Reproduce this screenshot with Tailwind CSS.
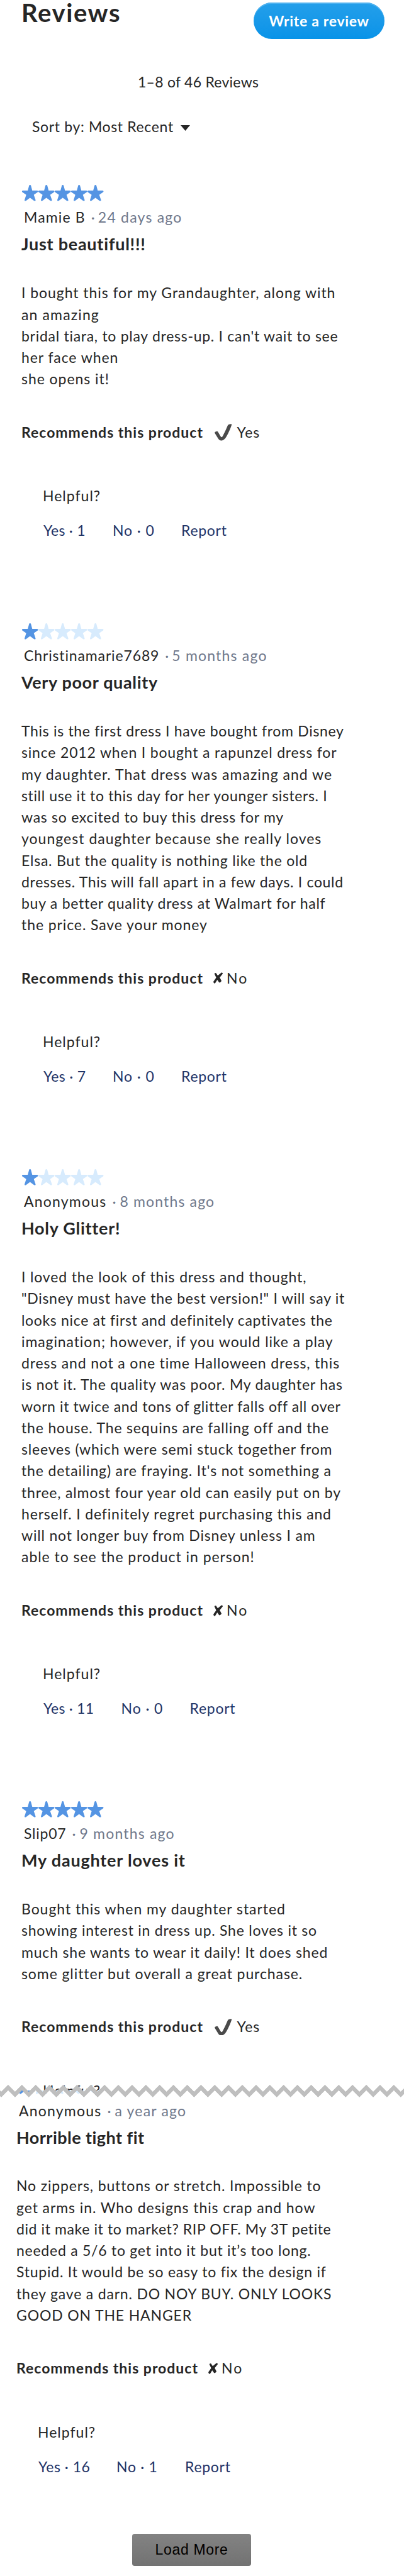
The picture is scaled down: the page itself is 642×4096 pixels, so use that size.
<!DOCTYPE html>
<html lang="en">
<head>
    <meta charset="UTF-8">
    <meta name="viewport" content="width=device-width, initial-scale=1.0">
    <title>Reviews</title>
    <script src="https://cdn.jsdelivr.net/npm/@tailwindcss/browser@4"></script>
</head>
<body class="bg-white font-['Lato','Open_Sans',sans-serif] text-[23px] leading-[30px] text-[#262626]">
    <!-- Shared icons -->
    <svg class="absolute w-0 h-0">
        <defs>
            <path id="star" d="M61 6Q63 0 69 0Q75 0 77 6L88 48L130 48Q137 49 137 56Q136 60 132 63L101 84L116 127Q118 135 110 136Q106 136 103 134L69 109L35 134Q32 136 28 136Q22 135 23 127L37 84L6 63Q2 60 1 56Q1 49 8 48L50 48Z"/>
            <path id="tear" d="M-19.9 18.4l10.945-11 10.945 11 10.945-11 10.945 11 10.945-11 10.945 11 10.945-11 10.945 11 10.945-11 10.945 11 10.945-11 10.945 11 10.945-11 10.945 11 10.945-11 10.945 11 10.945-11 10.945 11 10.945-11 10.945 11 10.945-11 10.945 11 10.945-11 10.945 11 10.945-11 10.945 11 10.945-11 10.945 11 10.945-11 10.945 11 10.945-11 10.945 11 10.945-11 10.945 11 10.945-11 10.945 11 10.945-11 10.945 11 10.945-11 10.945 11 10.945-11 10.945 11 10.945-11 10.945 11 10.945-11 10.945 11 10.945-11 10.945 11 10.945-11 10.945 11 10.945-11 10.945 11 10.945-11 10.945 11 10.945-11 10.945 11 10.945-11 10.945 11 10.945-11 10.945 11 10.945-11 10.945 11 10.945-11 10.945 11 10.945-11 10.945 11"/>
        </defs>
        <symbol id="stars-5" viewBox="0 0 690 138">
            <g fill="#5494e3"><use href="#star"/><use href="#star" x="138"/><use href="#star" x="276"/><use href="#star" x="414"/><use href="#star" x="552"/></g>
        </symbol>
        <symbol id="stars-1" viewBox="0 0 690 138">
            <use href="#star" fill="#5494e3"/>
            <g fill="#d7ebfd"><use href="#star" x="138"/><use href="#star" x="276"/><use href="#star" x="414"/><use href="#star" x="552"/></g>
        </symbol>
        <symbol id="check" viewBox="0 0 145 140">
            <path d="M111 10Q118 0 144 2C140 20 110 95 88 122Q54 156 32 126L2 78Q-1 68 8 65Q24 58 29 68L50 104Q58 118 67 104Q90 60 111 10Z"/>
        </symbol>
        <symbol id="cross" viewBox="0 0 82 95">
            <path d="M9 12Q12 5 22 5L37 27L70 1Q76 3 81 10L54 43L69 72Q64 84 50 87L33 64L15 93Q5 95 1 83L1 78L24 45Z"/>
        </symbol>
    </svg>

    <main class="relative w-[642px] h-[4096px] overflow-hidden">
        <header class="flex items-start justify-between h-[62px] pl-[34px] pr-[31px]">
            <h1 class="text-[40px] leading-[40px] font-bold tracking-[1.6px]">Reviews</h1>
            <button class="mt-1 w-[208px] h-[58px] rounded-full bg-linear-to-b from-[#239fea] to-[#0793e8] shadow-[inset_0_2px_0_#4fb2ef] text-white font-bold tracking-[.68px] leading-[30px]">Write a review</button>
        </header>
        <p class="mt-[53px] ml-[219px] tracking-[.26px]">1–8 of 46 Reviews</p>
        <div class="flex items-center mt-[41px] ml-[51px]">
            <span class="w-[236px] tracking-[.65px] whitespace-nowrap">Sort by: Most Recent</span>
            <svg class="w-[15px] h-[9px] mt-[4px]" viewBox="0 0 15 9"><path d="M0 0H15L7.5 9Z" fill="#262626"/></svg>
        </div>

        <!-- Review 1 -->
        <article class="mt-[78px] pl-[34px]">
            <svg class="block w-[131.4px] h-[26px]"><use href="#stars-5"/></svg>
            <div class="flex mt-[10.4px] pl-[4px] text-[#6f788b]">
                <span class="text-[#262626] tracking-[1.15px]">Mamie B</span>
                <span class="ml-[9px] w-[6px] text-center">·</span>
                <span class="ml-[5px] tracking-[1.22px]">24 days ago</span>
            </div>
            <h2 class="mt-[11px] text-[27px] leading-[34px] font-bold tracking-[.75px]">Just beautiful!!!</h2>
            <p class="mt-[42.9px] leading-[34.26px] whitespace-nowrap">
                <span class="block tracking-[.94px]">I bought this for my Grandaughter, along with</span>
                <span class="block tracking-[1.13px]">an amazing</span>
                <span class="block tracking-[.72px]">bridal tiara, to play dress-up. I can't wait to see</span>
                <span class="block tracking-[.91px]">her face when</span>
                <span class="block tracking-[.94px]">she opens it!</span>
            </p>
            <div class="flex items-start mt-[52px] h-[30px]">
                <b class="w-[307px] tracking-[.99px]">Recommends this product</b>
                <svg class="w-[27.6px] h-[26.7px] mt-[2.4px] fill-[#4a4a4a]"><use href="#check"/></svg>
                <span class="ml-[8px] tracking-[.83px]">Yes</span>
            </div>
            <p class="mt-[71.6px] pl-[34px] tracking-[1.01px]">Helpful?</p>
            <div class="flex mt-[25px] pl-[35px] text-[#1f3467]">
                <span class="w-[110px] tracking-[.24px]">Yes · 1</span>
                <span class="w-[109px] tracking-[.9px]">No · 0</span>
                <span class="tracking-[.72px]">Report</span>
            </div>
        </article>

        <!-- Review 2 -->
        <article class="mt-[132.5px] pl-[34px]">
            <svg class="block w-[131.4px] h-[26px]"><use href="#stars-1"/></svg>
            <div class="flex mt-[10.4px] pl-[4px] text-[#6f788b]">
                <span class="text-[#262626] tracking-[.86px]">Christinamarie7689</span>
                <span class="ml-[9px] w-[6px] text-center">·</span>
                <span class="ml-[5px] tracking-[1.19px]">5 months ago</span>
            </div>
            <h2 class="mt-[11px] text-[27px] leading-[34px] font-bold tracking-[.65px]">Very poor quality</h2>
            <p class="mt-[42.9px] leading-[34.26px] whitespace-nowrap">
                <span class="block tracking-[.68px]">This is the first dress I have bought from Disney</span>
                <span class="block tracking-[.82px]">since 2012 when I bought a rapunzel dress for</span>
                <span class="block tracking-[1px]">my daughter. That dress was amazing and we</span>
                <span class="block tracking-[.63px]">still use it to this day for her younger sisters. I</span>
                <span class="block tracking-[.72px]">was so excited to buy this dress for my</span>
                <span class="block tracking-[1.02px]">youngest daughter because she really loves</span>
                <span class="block tracking-[.77px]">Elsa. But the quality is nothing like the old</span>
                <span class="block tracking-[.68px]">dresses. This will fall apart in a few days. I could</span>
                <span class="block tracking-[.74px]">buy a better quality dress at Walmart for half</span>
                <span class="block tracking-[.9px]">the price. Save your money</span>
            </p>
            <div class="flex items-start mt-[52px] h-[30px]">
                <b class="w-[304.5px] tracking-[.99px]">Recommends this product</b>
                <svg class="w-[15.5px] h-[18px] mt-[6.8px] fill-[#262626]"><use href="#cross"/></svg>
                <span class="ml-[6px] tracking-[2px]">No</span>
            </div>
            <p class="mt-[71.6px] pl-[34px] tracking-[1.01px]">Helpful?</p>
            <div class="flex mt-[25px] pl-[35px] text-[#1f3467]">
                <span class="w-[110px] tracking-[.34px]">Yes · 7</span>
                <span class="w-[109px] tracking-[.9px]">No · 0</span>
                <span class="tracking-[.72px]">Report</span>
            </div>
        </article>

        <!-- Review 3 -->
        <article class="mt-[132.5px] pl-[34px]">
            <svg class="block w-[131.4px] h-[26px]"><use href="#stars-1"/></svg>
            <div class="flex mt-[10.4px] pl-[4px] text-[#6f788b]">
                <span class="text-[#262626] tracking-[1.21px]">Anonymous</span>
                <span class="ml-[9px] w-[6px] text-center">·</span>
                <span class="ml-[6px] tracking-[1.15px]">8 months ago</span>
            </div>
            <h2 class="mt-[11px] text-[27px] leading-[34px] font-bold tracking-[.72px]">Holy Glitter!</h2>
            <p class="mt-[42.9px] leading-[34.26px] whitespace-nowrap">
                <span class="block tracking-[.85px]">I loved the look of this dress and thought,</span>
                <span class="block tracking-[.71px]">"Disney must have the best version!" I will say it</span>
                <span class="block tracking-[.67px]">looks nice at first and definitely captivates the</span>
                <span class="block tracking-[.89px]">imagination; however, if you would like a play</span>
                <span class="block tracking-[.84px]">dress and not a one time Halloween dress, this</span>
                <span class="block tracking-[.76px]">is not it. The quality was poor. My daughter has</span>
                <span class="block tracking-[.6px]">worn it twice and tons of glitter falls off all over</span>
                <span class="block tracking-[.82px]">the house. The sequins are falling off and the</span>
                <span class="block tracking-[.82px]">sleeves (which were semi stuck together from</span>
                <span class="block tracking-[.84px]">the detailing) are fraying. It's not something a</span>
                <span class="block tracking-[.81px]">three, almost four year old can easily put on by</span>
                <span class="block tracking-[.84px]">herself. I definitely regret purchasing this and</span>
                <span class="block tracking-[.82px]">will not longer buy from Disney unless I am</span>
                <span class="block tracking-[.95px]">able to see the product in person!</span>
            </p>
            <div class="flex items-start mt-[52px] h-[30px]">
                <b class="w-[304.5px] tracking-[.99px]">Recommends this product</b>
                <svg class="w-[15.5px] h-[18px] mt-[6.8px] fill-[#262626]"><use href="#cross"/></svg>
                <span class="ml-[6px] tracking-[2px]">No</span>
            </div>
            <p class="mt-[71.6px] pl-[34px] tracking-[1.01px]">Helpful?</p>
            <div class="flex mt-[25px] pl-[35px] text-[#1f3467]">
                <span class="w-[123.6px] tracking-[.23px]">Yes · 11</span>
                <span class="w-[109px] tracking-[.9px]">No · 0</span>
                <span class="tracking-[.72px]">Report</span>
            </div>
        </article>

        <!-- Review 4, cut off by the tear -->
        <article class="mt-[132.5px] pl-[34px] h-[460.3px] overflow-hidden">
            <svg class="block w-[131.4px] h-[26px]"><use href="#stars-5"/></svg>
            <div class="flex mt-[10.4px] pl-[4px] text-[#6f788b]">
                <span class="text-[#262626] tracking-[.78px]">Slip07</span>
                <span class="ml-[9px] w-[6px] text-center">·</span>
                <span class="ml-[6px] tracking-[1.19px]">9 months ago</span>
            </div>
            <h2 class="mt-[11px] text-[27px] leading-[34px] font-bold tracking-[.8px]">My daughter loves it</h2>
            <p class="mt-[42.9px] leading-[34.26px] whitespace-nowrap">
                <span class="block tracking-[.94px]">Bought this when my daughter started</span>
                <span class="block tracking-[.75px]">showing interest in dress up. She loves it so</span>
                <span class="block tracking-[.81px]">much she wants to wear it daily! It does shed</span>
                <span class="block tracking-[.91px]">some glitter but overall a great purchase.</span>
            </p>
            <div class="flex items-start mt-[52px] h-[30px]">
                <b class="w-[307px] tracking-[.99px]">Recommends this product</b>
                <svg class="w-[27.6px] h-[26.7px] mt-[2.4px] fill-[#4a4a4a]"><use href="#check"/></svg>
                <span class="ml-[8px] tracking-[.83px]">Yes</span>
            </div>
            <p class="mt-[71.6px] pl-[34px] tracking-[1.01px]">Helpful?</p>
        </article>

        <!-- Review 5, starts below the tear -->
        <article class="pl-[26px] overflow-hidden">
            <svg class="block w-[131.4px] h-[26px] -mt-[20px]"><use href="#stars-1"/></svg>
            <div class="flex mt-[10.4px] pl-[4px] text-[#6f788b]">
                <span class="text-[#262626] tracking-[1.21px]">Anonymous</span>
                <span class="ml-[9px] w-[6px] text-center">·</span>
                <span class="ml-[6px] tracking-[1.2px]">a year ago</span>
            </div>
            <h2 class="mt-[11px] text-[27px] leading-[34px] font-bold tracking-[.46px]">Horrible tight fit</h2>
            <p class="mt-[42.9px] leading-[34.26px] whitespace-nowrap">
                <span class="block tracking-[.86px]">No zippers, buttons or stretch. Impossible to</span>
                <span class="block tracking-[.91px]">get arms in. Who designs this crap and how</span>
                <span class="block tracking-[.6px]">did it make it to market? RIP OFF. My 3T petite</span>
                <span class="block tracking-[.75px]">needed a 5/6 to get into it but it’s too long.</span>
                <span class="block tracking-[.77px]">Stupid. It would be so easy to fix the design if</span>
                <span class="block tracking-[.8px]">they gave a darn. DO NOY BUY. ONLY LOOKS</span>
                <span class="block tracking-[.85px]">GOOD ON THE HANGER</span>
            </p>
            <div class="flex items-start mt-[52px] h-[30px]">
                <b class="w-[304.5px] tracking-[.99px]">Recommends this product</b>
                <svg class="w-[15.5px] h-[18px] mt-[6.8px] fill-[#262626]"><use href="#cross"/></svg>
                <span class="ml-[6px] tracking-[2px]">No</span>
            </div>
            <p class="mt-[71.6px] pl-[34px] tracking-[1.01px]">Helpful?</p>
            <div class="flex mt-[25px] pl-[35px] text-[#1f3467]">
                <span class="w-[124px] tracking-[.5px]">Yes · 16</span>
                <span class="w-[109px] tracking-[.69px]">No · 1</span>
                <span class="tracking-[.72px]">Report</span>
            </div>
        </article>

        <button class="block mt-[92px] ml-[210px] w-[189px] h-[51px] rounded-[4px] bg-linear-to-b from-[#838383] to-[#727272] font-['Liberation_Sans',sans-serif] text-black tracking-[.66px]">Load More</button>

        <!-- Zigzag tear -->
        <svg class="absolute left-0 top-[3312px] w-[642px] h-[26px]" viewBox="0 0 642 26" fill="none" stroke-miterlimit="10">
            <use href="#tear" stroke="#b2b2b2" stroke-width="6.2"/>
            <use href="#tear" stroke="#bfbfbf" stroke-width="5.2"/>
        </svg>
    </main>
</body>
</html>
